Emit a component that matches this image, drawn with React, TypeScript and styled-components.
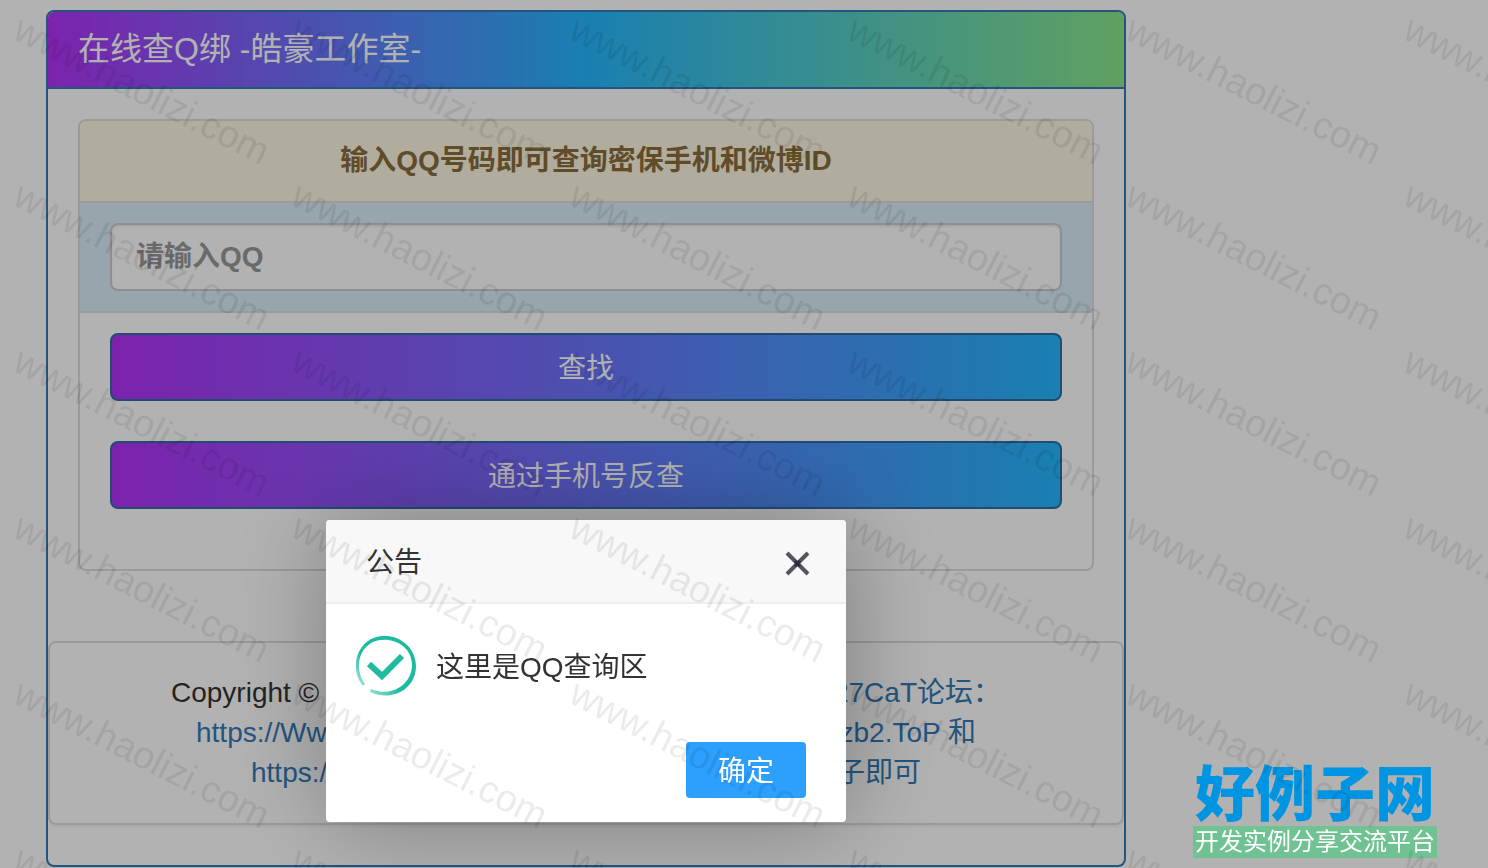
import React, { useState } from "react";
import styled, { createGlobalStyle } from "styled-components";

const GlobalStyle = createGlobalStyle`
  *, *::before, *::after { box-sizing: border-box; }
  body {
    margin: 0;
    background: #fff;
    color: #333;
    font-family: "Liberation Sans", "Noto Sans CJK SC", sans-serif;
    font-size: 28px;
    line-height: 40px;
  }
`;

const Page = styled.main`
  max-width: 1172px;
  padding: 10px 46px 0;
`;

const Panel = styled.section`
  border: 2px solid #337ab7;
  border-radius: 8px;
  background: #fff;
`;

const PanelHeader = styled.header`
  padding: 20px 30px;
  border-bottom: 2px solid #337ab7;
  border-radius: 6px 6px 0 0;
  background: linear-gradient(to right, #b232f8, #25b7fe, #8ae68a);
`;

const PanelTitle = styled.h1`
  margin: 0;
  color: #fff;
  font-size: 32px;
  font-weight: 400;
  line-height: 35px;
`;

const QueryForm = styled.form`
  margin: 30px 30px 70px;
  padding-bottom: 40px;
  border: 2px solid #ddd;
  border-radius: 8px;
`;

const Notice = styled.label`
  display: block;
  padding: 20px 30px;
  border-bottom: 2px solid #ddd;
  border-radius: 6px 6px 0 0;
  background: #fcf8e3;
  color: #8a6d3b;
  font-weight: 700;
  text-align: center;
`;

const FormRow = styled.div<{ $tinted?: boolean }>`
  padding: 20px 30px;
  ${({ $tinted }) => $tinted && "background: #d9edf7; border-bottom: 2px solid #ddd;"}
`;

const NumberInput = styled.input`
  display: block;
  width: 100%;
  height: 68px;
  padding: 12px 24px;
  border: 2px solid #ccc;
  border-radius: 8px;
  background: #fff;
  box-shadow: inset 0 2px 2px rgba(0, 0, 0, 0.075);
  color: #555;
  font: inherit;
  font-weight: 700;
  &::placeholder {
    color: #999;
    opacity: 1;
  }
`;

const GradientButton = styled.button`
  display: block;
  width: 100%;
  height: 68px;
  padding: 14px 24px 12px;
  border: 2px solid #2e6da4;
  border-radius: 8px;
  background: linear-gradient(to right, #b232f8, #25b7fe);
  color: #fff;
  font: inherit;
`;

const Footer = styled.footer`
  margin-bottom: 40px;
  padding: 30px;
  border: 2px solid #ddd;
  border-radius: 8px;
  box-shadow: 0 2px 2px rgba(0, 0, 0, 0.05);
`;

const FooterLine = styled.div<{ $width: number }>`
  display: flex;
  justify-content: space-between;
  max-width: ${({ $width }) => $width}px;
  margin: 0 auto;
`;

const FooterLink = styled.a`
  color: #337ab7;
  text-decoration: none;
`;

const Backdrop = styled.div`
  position: fixed;
  inset: 0;
  background: rgba(0, 0, 0, 0.3);
`;

const DialogLayer = styled.div`
  position: fixed;
  top: 520px;
  left: 0;
  display: flex;
  justify-content: center;
  width: 100%;
  max-width: 1172px;
`;

const Dialog = styled.div`
  width: 520px;
  border-radius: 4px;
  background: #fff;
  box-shadow: 2px 2px 100px rgba(0, 0, 0, 0.3);
`;

const DialogHeader = styled.div`
  display: flex;
  align-items: center;
  justify-content: space-between;
  height: 84px;
  padding: 4px 32px 0 40px;
  border-bottom: 2px solid #eee;
  border-radius: 4px 4px 0 0;
  background: #f8f8f8;
`;

const DialogTitle = styled.h2`
  margin: 0;
  font-size: 28px;
  font-weight: 400;
`;

const CloseButton = styled.button`
  display: flex;
  padding: 0;
  border: 0;
  background: none;
  color: #54535f;
`;

const DialogBody = styled.div`
  display: flex;
  align-items: center;
  gap: 20px;
  padding: 32px 30px 46px;
`;

const DialogMessage = styled.p`
  margin: 0;
  padding-top: 4px;
`;

const DialogActions = styled.div`
  display: flex;
  justify-content: flex-end;
  padding: 0 40px 24px;
`;

const ConfirmButton = styled.button`
  width: 120px;
  height: 56px;
  padding: 4px 0 0;
  border: 0;
  border-radius: 4px;
  background: #2d9ffd;
  color: #fff;
  font: inherit;
`;

const SiteLogo = styled.div`
  position: fixed;
  right: 51px;
  bottom: 10px;
  width: 244px;
  text-align: center;
  white-space: nowrap;
`;

const LogoName = styled.div`
  color: #0095e2;
  font-family: "Noto Sans CJK SC", sans-serif;
  font-size: 60px;
  font-weight: 900;
  line-height: 64px;
  padding-bottom: 4px;
`;

const LogoTagline = styled.div`
  background: #70c292;
  color: #fff;
  font-size: 24px;
  line-height: 32px;
`;

const WatermarkGrid = styled.div`
  position: fixed;
  inset: 0;
  display: grid;
  grid-template-columns: repeat(6, 278px);
  grid-auto-rows: 166px;
  padding-left: 3px;
  padding-top: 7px;
  overflow: hidden;
  pointer-events: none;
`;

const Watermark = styled.span`
  display: flex;
  align-items: center;
  justify-content: center;
  color: rgba(0, 0, 0, 0.08);
  font-size: 38px;
  transform: rotate(27deg);
`;

const CloseIcon = () => (
  <svg width="32" height="28" viewBox="0 0 32 28" aria-hidden="true">
    <path d="M5 4 26 25M26 4 5 25" stroke="currentColor" strokeWidth="4" fill="none" />
    <path d="M13 12 18 17M18 12 13 17" stroke="#2e2d3c" strokeWidth="3" fill="none" />
  </svg>
);

const SuccessIcon = () => (
  <svg width="60" height="60" viewBox="0 0 60 60" fill="none" aria-hidden="true">
    <defs>
      <linearGradient id="ring" x1="0" y1="1" x2="1" y2="0">
        <stop offset="0.1" stopColor="#a5e4d9" />
        <stop offset="0.4" stopColor="#1fbba0" />
      </linearGradient>
    </defs>
    <path
      fill="url(#ring)"
      fillRule="evenodd"
      d="M7 50C-4 38-3 13 15 3C36-7 60 8 60 30C60 54 35 66 14 56L15 53C36 62 56 48 56 29C56 9 34-1 17 6C1 14-1 35 9 48Z"
    />
    <path d="m13 28 13 12 20-20" stroke="#1fbba0" strokeWidth="6" />
  </svg>
);

const watermarks = Array.from({ length: 36 }, (_, index) => index);

export default function App() {
  const [open, setOpen] = useState(true);
  const close = () => setOpen(false);

  return (
    <>
      <GlobalStyle />
      <Page>
        <Panel>
          <PanelHeader>
            <PanelTitle>在线查Q绑 -皓豪工作室-</PanelTitle>
          </PanelHeader>
          <QueryForm onSubmit={(event) => event.preventDefault()}>
            <Notice htmlFor="qq">输入QQ号码即可查询密保手机和微博ID</Notice>
            <FormRow $tinted>
              <NumberInput id="qq" type="text" placeholder="请输入QQ" />
            </FormRow>
            <FormRow>
              <GradientButton type="submit">查找</GradientButton>
            </FormRow>
            <FormRow>
              <GradientButton type="button">通过手机号反查</GradientButton>
            </FormRow>
          </QueryForm>
          <Footer>
            <FooterLine $width={830}>
              <span>Copyright ©</span>
              <FooterLink href="#forum">27CaT论坛：</FooterLink>
            </FooterLine>
            <FooterLine $width={780}>
              <FooterLink href="#forum">https://Ww</FooterLink>
              <FooterLink href="#forum">zb2.ToP 和</FooterLink>
            </FooterLine>
            <FooterLine $width={670}>
              <FooterLink href="#forum">https://</FooterLink>
              <FooterLink href="#forum">子即可</FooterLink>
            </FooterLine>
          </Footer>
        </Panel>
      </Page>
      {open && (
        <>
          <Backdrop />
          <DialogLayer>
            <Dialog role="dialog" aria-labelledby="dialog-title">
              <DialogHeader>
                <DialogTitle id="dialog-title">公告</DialogTitle>
                <CloseButton type="button" aria-label="关闭" onClick={close}>
                  <CloseIcon />
                </CloseButton>
              </DialogHeader>
              <DialogBody>
                <SuccessIcon />
                <DialogMessage>这里是QQ查询区</DialogMessage>
              </DialogBody>
              <DialogActions>
                <ConfirmButton type="button" onClick={close}>
                  确定
                </ConfirmButton>
              </DialogActions>
            </Dialog>
          </DialogLayer>
        </>
      )}
      <SiteLogo>
        <LogoName>好例子网</LogoName>
        <LogoTagline>开发实例分享交流平台</LogoTagline>
      </SiteLogo>
      <WatermarkGrid aria-hidden="true">
        {watermarks.map((index) => (
          <Watermark key={index}>www.haolizi.com</Watermark>
        ))}
      </WatermarkGrid>
    </>
  );
}
